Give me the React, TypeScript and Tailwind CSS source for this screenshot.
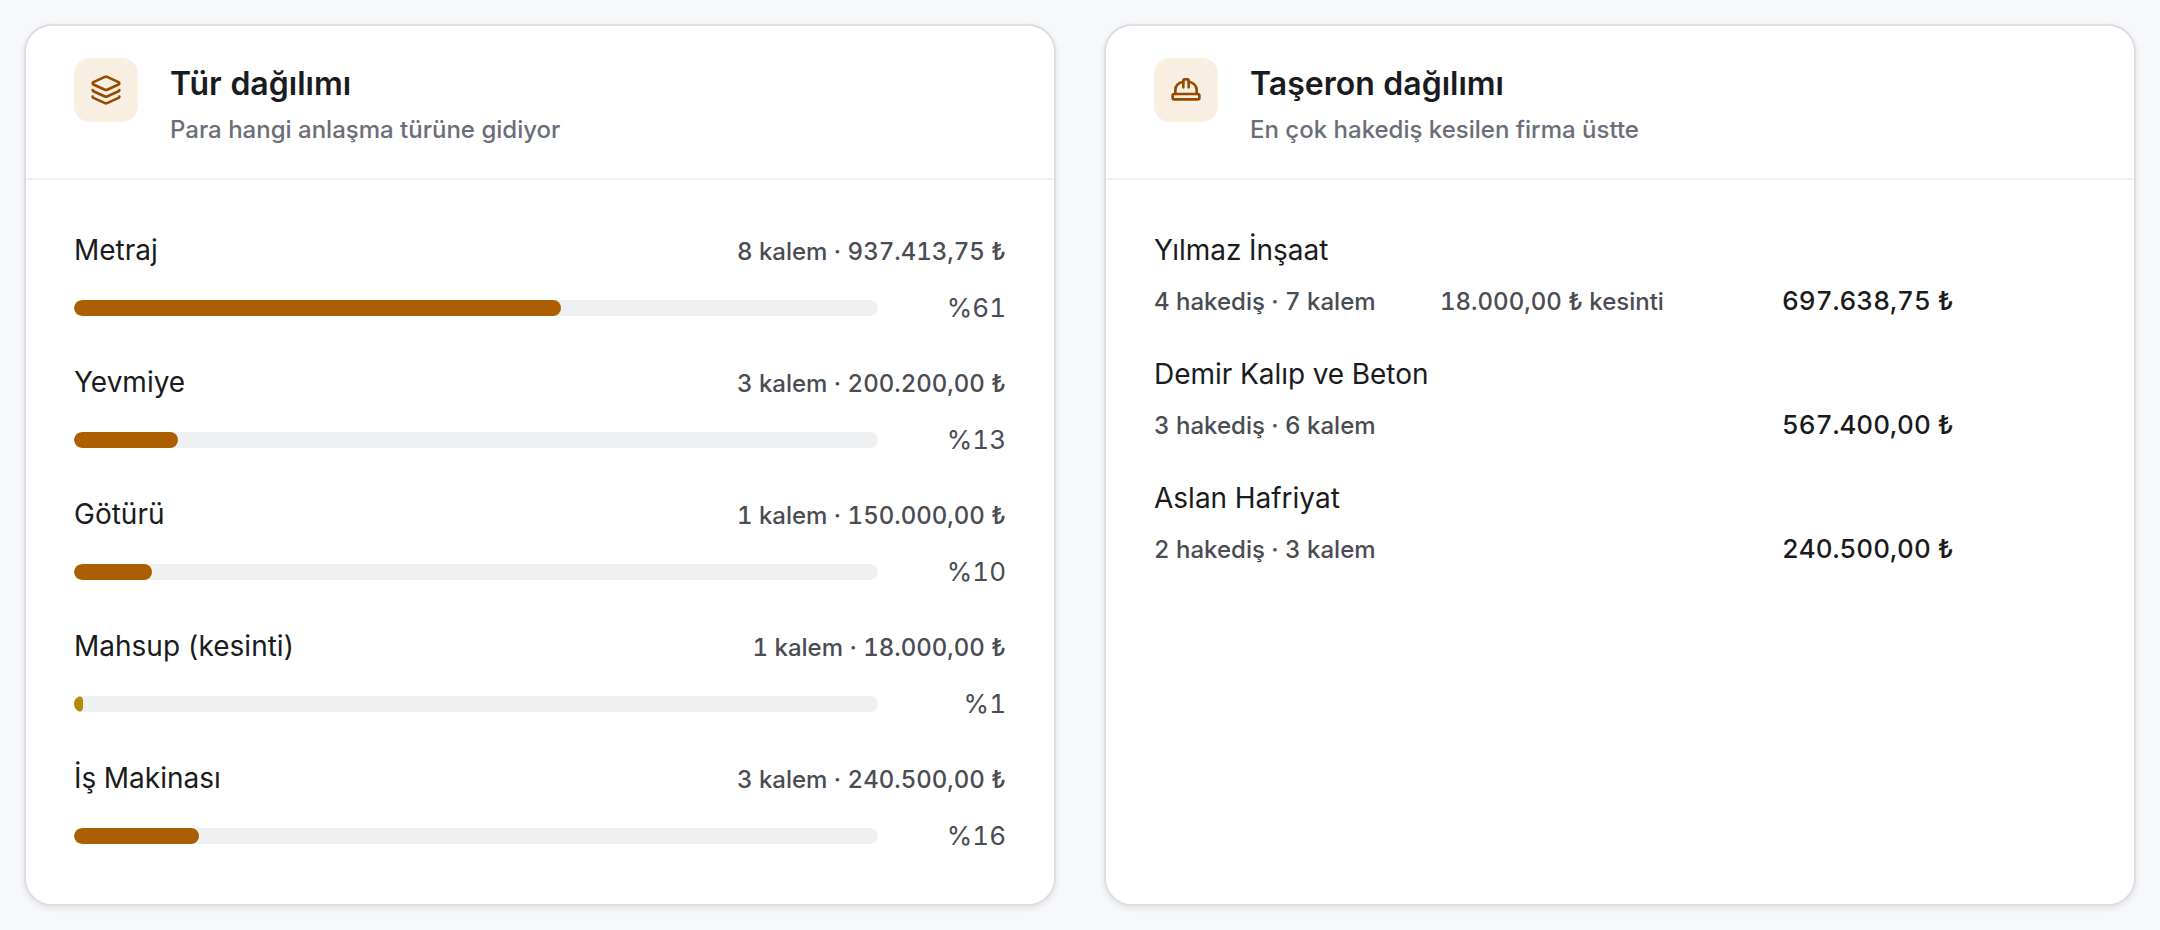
import type { ReactNode } from "react";
import { HardHat, Layers } from "lucide-react";

type TypeShare = { name: string; items: number; amount: number; deduction?: boolean };
type Contractor = { name: string; claims: number; items: number; deduction?: number; amount: number };

const types: TypeShare[] = [
  { name: "Metraj", items: 8, amount: 937413.75 },
  { name: "Yevmiye", items: 3, amount: 200200 },
  { name: "Götürü", items: 1, amount: 150000 },
  { name: "Mahsup (kesinti)", items: 1, amount: 18000, deduction: true },
  { name: "İş Makinası", items: 3, amount: 240500 },
];

const contractors: Contractor[] = [
  { name: "Yılmaz İnşaat", claims: 4, items: 7, deduction: 18000, amount: 697638.75 },
  { name: "Demir Kalıp ve Beton", claims: 3, items: 6, amount: 567400 },
  { name: "Aslan Hafriyat", claims: 2, items: 3, amount: 240500 },
];

const total = types.reduce((sum, t) => sum + t.amount, 0);

function money(value: number) {
  const [whole, cents] = value.toFixed(2).split(".");
  return `${whole.replace(/\B(?=(\d{3})+$)/g, ".")},${cents} ₺`;
}

function Card({ icon, title, subtitle, children }: { icon: ReactNode; title: string; subtitle: string; children: ReactNode }) {
  return (
    <section className="min-w-0 rounded-[28px] border-2 border-[#dddee3] bg-white shadow-[0_2px_6px_rgba(20,22,30,0.1)]">
      <header className="flex items-start gap-8 border-b-2 border-[#eff0f2] px-12 py-8">
        <div className="flex size-16 shrink-0 items-center justify-center rounded-2xl bg-[#f8eee2] text-[#944b00]">{icon}</div>
        <div className="flex flex-col gap-1">
          <h2 className="text-[32px] leading-[52px] font-semibold">{title}</h2>
          <p className="text-2xl leading-8 font-medium text-[#6b6e78]">{subtitle}</p>
        </div>
      </header>
      <div className="p-12">{children}</div>
    </section>
  );
}

export default function App() {
  return (
    <main className="grid min-h-screen grid-cols-2 gap-12 bg-[#f7f8fa] p-6 font-['Inter',sans-serif] text-[#1a1b20] tabular-nums">
      <Card icon={<Layers size={32} strokeWidth={2} />} title="Tür dağılımı" subtitle="Para hangi anlaşma türüne gidiyor">
        <ul className="flex flex-col gap-8">
          {types.map((t) => {
            const share = (t.amount / total) * 100;
            return (
              <li key={t.name} className="flex flex-col gap-4">
                <div className="flex items-baseline justify-between">
                  <span className="text-[28px] leading-[44px]">{t.name}</span>
                  <span className="text-2xl font-medium text-[#4a4c54]">
                    {t.items} kalem · {money(t.amount)}
                  </span>
                </div>
                <div className="flex items-center gap-8">
                  <div className="h-4 flex-1 overflow-hidden rounded-full bg-[#eff0f2]">
                    <div
                      className={`h-full rounded-full ${t.deduction ? "bg-[#b58900]" : "bg-[#ad5f00]"}`}
                      style={{ width: `${share}%` }}
                    />
                  </div>
                  <span className="w-24 text-right text-[26px] leading-10 text-[#4a4c54]">%{Math.round(share)}</span>
                </div>
              </li>
            );
          })}
        </ul>
      </Card>

      <Card icon={<HardHat size={32} strokeWidth={2} />} title="Taşeron dağılımı" subtitle="En çok hakediş kesilen firma üstte">
        <ul className="flex flex-col gap-8">
          {contractors.map((c) => (
            <li key={c.name} className="flex flex-col gap-2">
              <span className="text-[28px] leading-[44px]">{c.name}</span>
              <div className="grid h-10 grid-cols-[286fr_342fr_304fr] items-baseline leading-[42px] font-medium">
                <span className="text-2xl leading-[42px] text-[#4a4c54]">
                  {c.claims} hakediş · {c.items} kalem
                </span>
                <span className="text-2xl leading-[42px] text-[#4a4c54]">
                  {c.deduction ? `${money(c.deduction)} kesinti` : ""}
                </span>
                <span className="text-[26px]">{money(c.amount)}</span>
              </div>
            </li>
          ))}
        </ul>
      </Card>
    </main>
  );
}
